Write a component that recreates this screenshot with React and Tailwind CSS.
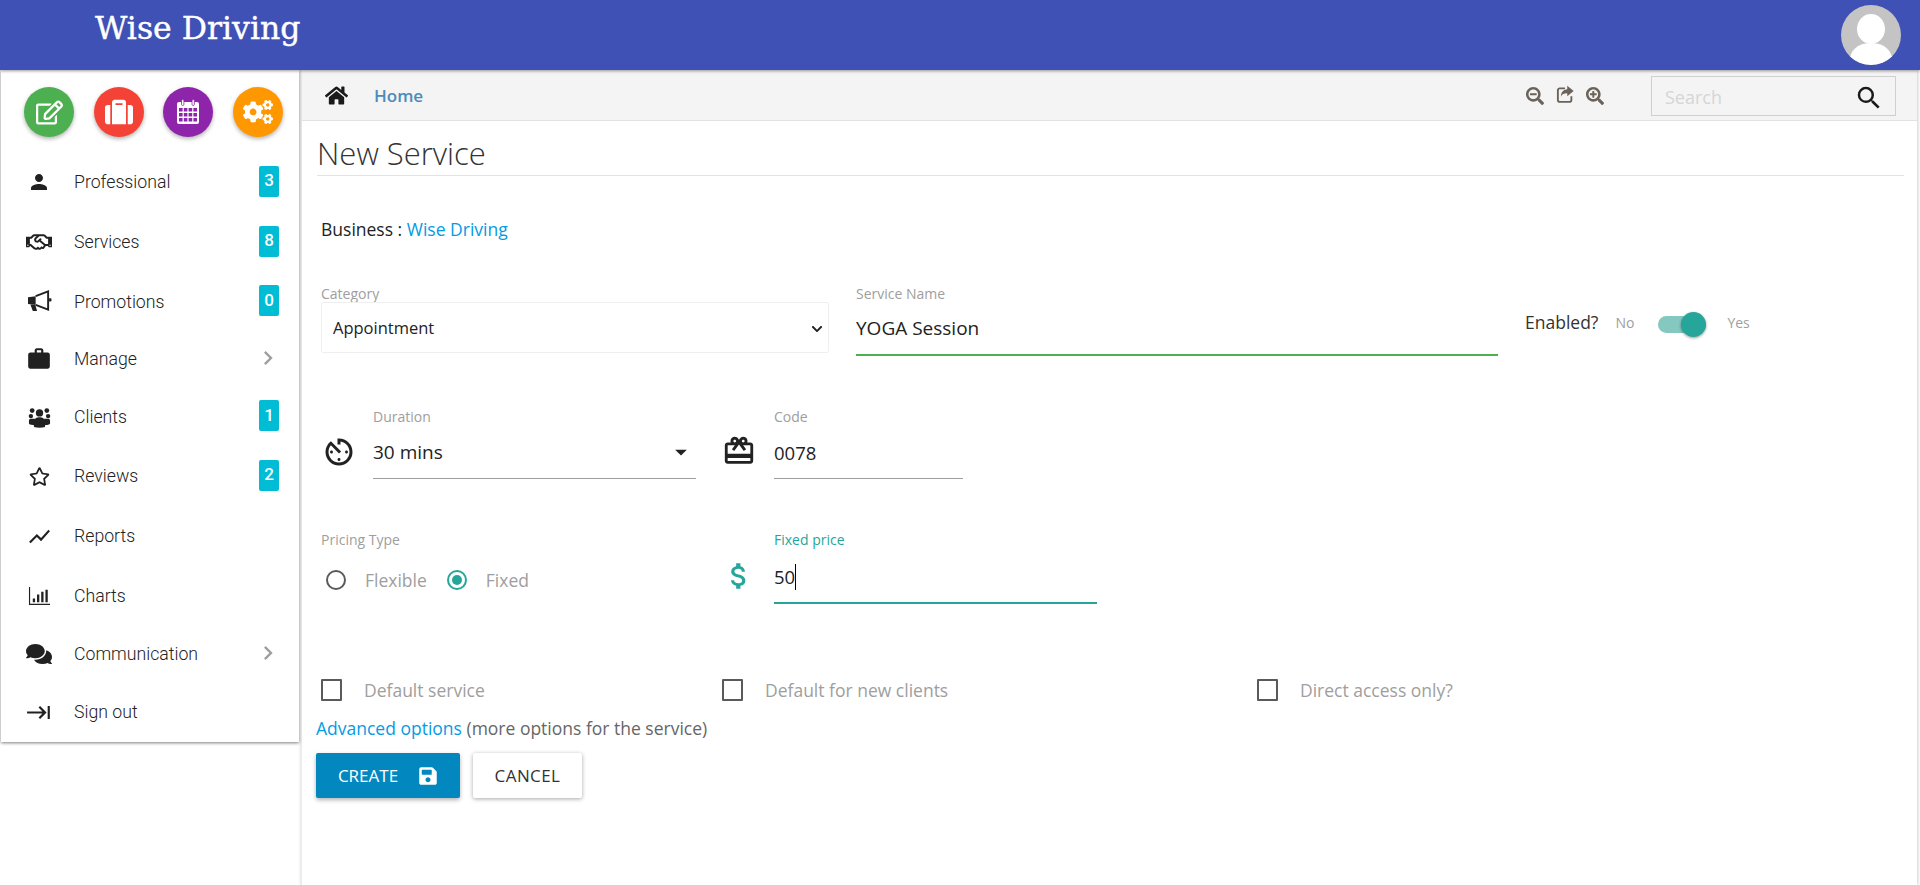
import React from "react";
import {
  FaHome,
  FaRegEdit,
  FaSuitcase,
  FaCogs,
  FaRegHandshake,
  FaRegStar,
  FaComments,
  FaSearchMinus,
  FaSearchPlus,
  FaSave,
  FaChevronDown,
} from "react-icons/fa";
import {
  MdPerson,
  MdWork,
  MdShowChart,
  MdKeyboardTab,
  MdChevronRight,
  MdAvTimer,
  MdOutlineCardGiftcard,
  MdAttachMoney,
  MdSearch,
  MdArrowDropDown,
} from "react-icons/md";

function ChartsIcon({ className }) {
  return (
    <svg viewBox="0 0 24 24" className={className} fill="currentColor">
      <path d="M1 3h1.200v17.600H23V22H1z" />
      <path d="M5 15h2.400v4H5zM9.400 11h2.400v8H9.400zM13.800 8h2.400v11h-2.400zM18.200 6h2.400v13h-2.400z" />
    </svg>
  );
}

function ClientsIcon({ className }) {
  return (
    <svg viewBox="0 0 24 24" className={className} fill="currentColor">
      <circle cx="12" cy="7.500" r="4" />
      <circle cx="4" cy="5" r="2.600" />
      <circle cx="20" cy="5" r="2.600" />
      <circle cx="2.600" cy="11" r="2.400" />
      <circle cx="21.400" cy="11" r="2.400" />
      <path d="M6 23v-6c0-3 3-4.600 6-4.600s6 1.600 6 4.600v6c-3.500 1-8.500 1-12 0z" />
      <path d="M.5 16c0-1.500 1-2 2.500-2h4v7c-3-.3-6.500-1-6.500-2zM23.500 16c0-1.500-1-2-2.500-2h-4v7c3-.3 6.500-1 6.500-2z" />
    </svg>
  );
}

function PromotionsIcon({ className }) {
  return (
    <svg viewBox="0 0 26 24" className={className} fill="currentColor">
      <path d="M1 7.500 9 6.500v9l-8-.8z" />
      <path d="M3.500 15h5l2 7H6z" />
      <path d="M9 6.500 22 1.500v19L9 15.500" fill="none" stroke="currentColor" strokeWidth="2" />
      <path d="M23 8.500h1.500a1 1 0 0 1 1 1v1.500a1 1 0 0 1-1 1H23z" />
    </svg>
  );
}

function CalendarIcon({ className }) {
  return (
    <svg viewBox="0 0 24 26" className={className}>
      <rect x="1" y="3" width="22" height="22" rx="2" fill="#fff" />
      <rect x="5.500" y="0.500" width="2.400" height="6" rx="1.200" fill="#fff" stroke="#8e24aa" strokeWidth="0.800" />
      <rect x="16" y="0.500" width="2.400" height="6" rx="1.200" fill="#fff" stroke="#8e24aa" strokeWidth="0.800" />
      <path
        fill="#8e24aa"
        d="M3 9h3.600v3.600H3zM7.800 9h3.600v3.600H7.800zM12.600 9h3.600v3.600h-3.600zM17.400 9H21v3.600h-3.600zM3 14h3.600v3.600H3zM7.800 14h3.600v3.600H7.800zM12.600 14h3.600v3.600h-3.600zM17.400 14H21v3.600h-3.600zM3 19h3.600v3.600H3zM7.800 19h3.600v3.600H7.800zM12.600 19h3.600v3.600h-3.600zM17.400 19H21v3.600h-3.600z"
      />
    </svg>
  );
}

function ShareIcon({ className }) {
  return (
    <svg viewBox="0 0 24 24" className={className} fill="currentColor">
      <path d="M12 4.500H5a2.500 2.500 0 0 0-2.500 2.500v13A2.500 2.500 0 0 0 5 22.500h13a2.500 2.500 0 0 0 2.500-2.500v-5" fill="none" stroke="currentColor" strokeWidth="2.500" />
      <path d="M15 1l8.500 7-8.500 7v-4c-4.500 0-7 1-8.500 4.500C6.500 9.500 10 6 15 5.500z" />
    </svg>
  );
}

const shortcuts = [
  { icon: FaRegEdit, bg: "bg-[#4caf50]", size: "w-[27px] h-[27px]" },
  { icon: FaSuitcase, bg: "bg-[#f44336]", size: "w-[28px] h-[28px]" },
  { icon: CalendarIcon, bg: "bg-[#8e24aa]", size: "w-[24px] h-[26px]" },
  { icon: FaCogs, bg: "bg-[#ff9800]", size: "w-[30px] h-[30px]" },
];

const navItems = [
  { label: "Professional", icon: MdPerson, iconSize: "w-[24px] h-[24px]", badge: 3, row: "h-[60px]" },
  { label: "Services", icon: FaRegHandshake, iconSize: "w-[26px] h-[26px]", badge: 8, row: "h-[60px]" },
  { label: "Promotions", icon: PromotionsIcon, iconSize: "w-[25px] h-[23px]", badge: 0, row: "h-[59px]" },
  { label: "Manage", icon: MdWork, iconSize: "w-[26px] h-[26px]", arrow: true, row: "h-[56px]" },
  { label: "Clients", icon: ClientsIcon, iconSize: "w-[23px] h-[22px]", badge: 1, row: "h-[59px]" },
  { label: "Reviews", icon: FaRegStar, iconSize: "w-[21px] h-[21px]", badge: 2, row: "h-[60px]" },
  { label: "Reports", icon: MdShowChart, iconSize: "w-[25px] h-[25px]", row: "h-[60px]" },
  { label: "Charts", icon: ChartsIcon, iconSize: "w-[23px] h-[23px]", row: "h-[59px]" },
  { label: "Communication", icon: FaComments, iconSize: "w-[26px] h-[26px]", arrow: true, row: "h-[58px]" },
  { label: "Sign out", icon: MdKeyboardTab, iconSize: "w-[27px] h-[27px]", row: "h-[58px]" },
];

function Sidebar() {
  return (
    <aside className="relative z-10 w-[298px] h-[672px] shrink-0 ml-[1px] mr-[1px] bg-white shadow-[0_1px_3px_rgba(0,0,0,0.5)] font-['Roboto',sans-serif] text-[17.700px] font-light text-[#222]">
      <div className="flex justify-between pl-[23px] pr-[16px] pt-[17px]">
        {shortcuts.map((s, i) => (
          <div
            key={i}
            className={`w-[50px] h-[50px] rounded-full flex items-center justify-center text-white shadow-[0_2px_4px_rgba(0,0,0,0.3)] ${s.bg}`}
          >
            <s.icon className={s.size} />
          </div>
        ))}
      </div>
      <nav className="mt-[14px]">
        {navItems.map((item) => (
          <div key={item.label} className={`flex items-center ${item.row}`}>
            <div className="w-[73px] pl-[25px] pt-[2px] flex justify-start text-[#212121]">
              <div className="w-[26px] flex justify-center">
                <item.icon className={item.iconSize} />
              </div>
            </div>
            <span className="flex-1 pt-[3px]">{item.label}</span>
            {item.badge !== undefined && (
              <span className="w-[20px] h-[31px] mr-[20px] rounded-[2px] bg-[#00bcd4] text-white text-[17px] font-medium flex items-center justify-center">
                {item.badge}
              </span>
            )}
            {item.arrow && <MdChevronRight className="w-[28px] h-[28px] mr-[17px] text-[#9e9e9e]" />}
          </div>
        ))}
      </nav>
    </aside>
  );
}

function Toolbar() {
  return (
    <div className="h-[51px] bg-[#f4f4f4] border-b border-[#e2e2e2] flex items-center">
      <FaHome className="w-[23px] h-[23px] ml-[23px] text-[#1a1a1a]" />
      <span className="ml-[26px] mt-[2px] text-[17px] font-semibold text-[#4a8bbd]">Home</span>
      <div className="flex-1" />
      <div className="flex gap-[12px] mt-[1px] text-[#6b6259]">
        <FaSearchMinus className="w-[18px] h-[18px]" />
        <ShareIcon className="w-[18px] h-[18px] -mt-[2px]" />
        <FaSearchPlus className="w-[18px] h-[18px]" />
      </div>
      <div className="ml-[47px] mr-[21px] mt-[1px] w-[245px] h-[40px] border border-[#cfcfcf] flex items-center pl-[13px] pr-[11px]">
        <span className="flex-1 mt-[3px] text-[18px] text-[#d6d6d6]">Search</span>
        <MdSearch className="w-[30px] h-[30px] mt-[5px] text-[#1a1a1a]" />
      </div>
    </div>
  );
}

function Label({ children, className = "text-[#9e9e9e]" }) {
  return <div className={`h-[17px] text-[14px] leading-[17px] ${className}`}>{children}</div>;
}

function Check({ label, className }) {
  return (
    <label className={`flex items-center h-[22px] ${className}`}>
      <span className="w-[21px] h-[22px] border-2 border-[#5a5a5a] rounded-[1px]" />
      <span className="ml-[22px] text-[17.500px] text-[#9e9e9e]">{label}</span>
    </label>
  );
}

function ServiceForm() {
  return (
    <div className="ml-[15px] mr-[13px]">
      <h1 className="h-[55px] pt-[12px] border-b border-[#e3e3e3] text-[31px] leading-[40px] font-light text-[#333]">
        New Service
      </h1>

      <div className="mt-[41px] ml-[4px] h-[24px] text-[17.500px] leading-[24px] text-[#222]">
        <span className="font-medium">Business</span> : <a className="text-[#039be5]">Wise Driving</a>
      </div>

      <div className="mt-[44px] ml-[4px] flex items-start">
        <div className="w-[535px]">
          <Label>Category</Label>
          <div className="relative w-[508px]">
            <select
              defaultValue="Appointment"
              className="w-full h-[51px] appearance-none border border-[#efefef] rounded-[2px] pl-[11px] pt-[1px] text-[16.500px] text-[#222] bg-white"
            >
              <option>Appointment</option>
            </select>
            <FaChevronDown className="absolute right-[6px] top-[21px] w-[12px] h-[12px] text-[#222]" />
          </div>
        </div>
        <div className="w-[642px]">
          <Label>Service Name</Label>
          <input
            readOnly
            defaultValue="YOGA Session"
            className="w-full h-[54px] border-b-2 border-[#4caf50] text-[19px] text-[#222] outline-none"
          />
        </div>
        <div className="ml-[27px] mt-[24px] flex items-center">
          <span className="text-[17.500px] text-[#333]">Enabled?</span>
          <span className="ml-[17px] mt-[1px] text-[14px] text-[#9e9e9e]">No</span>
          <div className="ml-[24px] mt-[4px] relative w-[48px] h-[17px] rounded-full bg-[#84c8c0]">
            <div className="absolute right-0 top-[-4px] w-[25px] h-[25px] rounded-full bg-[#26a69a] shadow-[0_1px_3px_rgba(0,0,0,0.4)]" />
          </div>
          <span className="ml-[21px] mt-[1px] text-[14px] text-[#9e9e9e]">Yes</span>
        </div>
      </div>

      <div className="mt-[52px] ml-[4px] flex items-start">
        <div className="w-[52px] pt-[26px]">
          <MdAvTimer className="w-[36px] h-[36px] text-[#222]" />
        </div>
        <div className="w-[323px]">
          <Label>Duration</Label>
          <div className="h-[54px] border-b border-[#9e9e9e] flex items-center pt-[2px] text-[19px] text-[#222]">
            <span className="flex-1">30 mins</span>
            <MdArrowDropDown className="w-[28px] h-[28px] mr-[1px] mb-[2px] text-[#222]" />
          </div>
        </div>
        <div className="w-[78px] pt-[26px] pl-[26px]">
          <MdOutlineCardGiftcard className="w-[34px] h-[34px] text-[#222]" />
        </div>
        <div className="w-[189px]">
          <Label>Code</Label>
          <input
            readOnly
            defaultValue="0078"
            className="w-full h-[54px] border-b border-[#9e9e9e] pt-[2px] text-[18.500px] text-[#222] outline-none"
          />
        </div>
      </div>

      <div className="mt-[52px] ml-[4px] flex items-start">
        <div className="w-[399px]">
          <Label>Pricing Type</Label>
          <div className="mt-[22px] flex items-center h-[20px] text-[17.500px] text-[#9e9e9e]">
            <span className="ml-[5px] w-[20px] h-[20px] rounded-full border-2 border-[#5a5a5a]" />
            <span className="ml-[19px]">Flexible</span>
            <span className="ml-[20px] w-[20px] h-[20px] rounded-full border-2 border-[#26a69a] flex items-center justify-center">
              <span className="w-[10px] h-[10px] rounded-full bg-[#26a69a]" />
            </span>
            <span className="ml-[19px]">Fixed</span>
          </div>
        </div>
        <div className="w-[54px] pt-[28px] text-[#26a69a]">
          <MdAttachMoney className="w-[34px] h-[34px] ml-[2px]" />
        </div>
        <div className="w-[323px]">
          <Label className="text-[#26a69a]">Fixed price</Label>
          <div className="h-[56px] border-b-2 border-[#26a69a] flex items-center pt-[3px] text-[18.500px] text-[#222]">
            <span>50</span>
            <span className="w-[1px] h-[26px] bg-black" />
          </div>
        </div>
      </div>

      <div className="mt-[75px] ml-[4px] flex">
        <Check label="Default service" className="w-[401px]" />
        <Check label="Default for new clients" className="w-[535px]" />
        <Check label="Direct access only?" className="" />
      </div>

      <div className="mt-[15px] -ml-[1px] h-[24px] text-[17.500px] leading-[24px] text-[#666]">
        <a className="text-[#039be5]">Advanced options</a> (more options for the service)
      </div>

      <div className="mt-[13px] -ml-[1px] flex gap-[13px]">
        <button className="w-[144px] h-[45px] rounded-[2px] bg-[#0288bf] text-white text-[17px] flex items-center justify-center gap-[20px] shadow-[0_2px_4px_rgba(0,0,0,0.3)]">
          CREATE
          <FaSave className="w-[20px] h-[20px]" />
        </button>
        <button className="w-[109px] h-[45px] rounded-[2px] bg-white text-[#333] text-[17px] tracking-wide shadow-[0_1px_4px_rgba(0,0,0,0.35)]">
          CANCEL
        </button>
      </div>
    </div>
  );
}

export default function App() {
  return (
    <div className="h-[885px] overflow-hidden bg-white font-['Open_Sans',sans-serif]">
      <header className="relative z-20 h-[70px] bg-[#3f51b5] flex items-start justify-between shadow-[0_1px_3px_rgba(0,0,0,0.4)]">
        <span className="ml-[95px] mt-[6px] font-['DejaVu_Serif',serif] text-[31.500px] leading-[44px] text-white [-webkit-text-stroke:0.4px_white]">
          Wise Driving
        </span>
        <div className="mt-[5px] mr-[19px] w-[60px] h-[60px] rounded-full overflow-hidden bg-[#c4c4c4]">
          <svg viewBox="0 0 60 60" className="w-full h-full" fill="#fff">
            <ellipse cx="30" cy="24" rx="14" ry="15" />
            <path d="M9 52c3-10 11-14 21-14s18 4 21 14c-5 5-13 8-21 8S14 57 9 52z" />
          </svg>
        </div>
      </header>
      <div className="flex h-[815px]">
        <Sidebar />
        <main className="flex-1 mr-[3px] border-l-2 border-[#ececec] shadow-[1px_0_3px_rgba(0,0,0,0.2)]">
          <Toolbar />
          <ServiceForm />
        </main>
      </div>
    </div>
  );
}
